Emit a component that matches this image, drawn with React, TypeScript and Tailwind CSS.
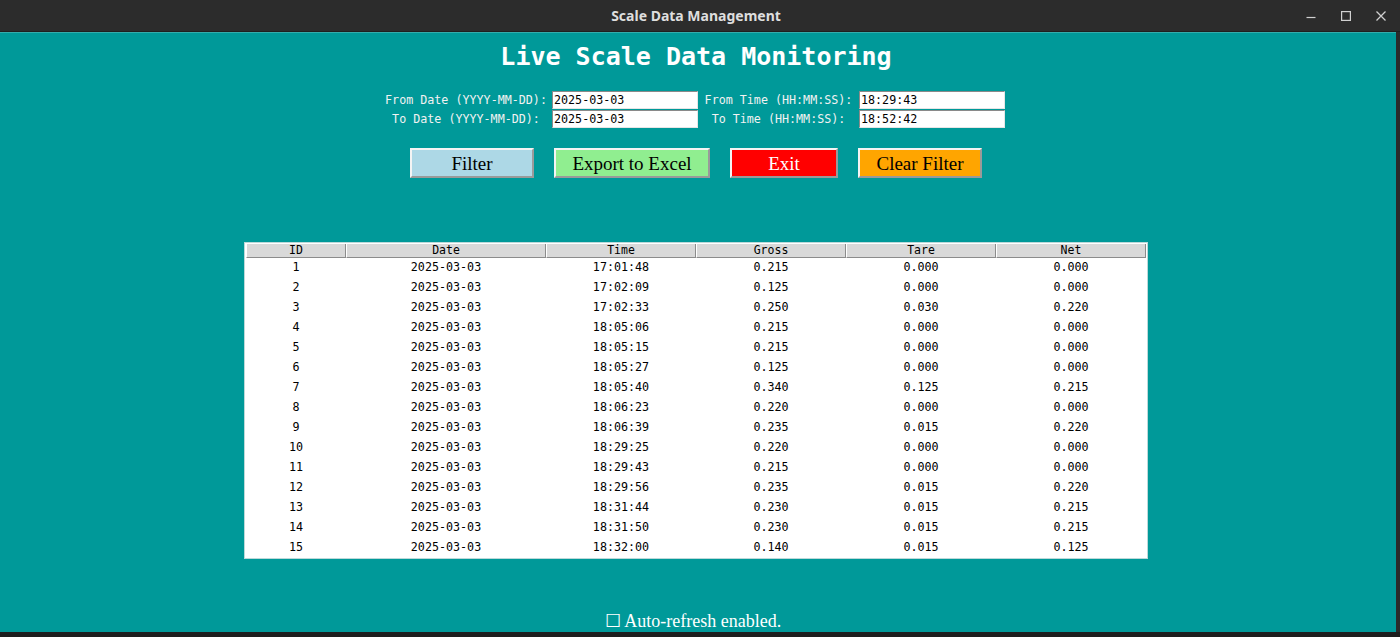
import React from 'react'

const rows: [number, string, string, string, string, string][] = [
  [1, '2025-03-03', '17:01:48', '0.215', '0.000', '0.000'],
  [2, '2025-03-03', '17:02:09', '0.125', '0.000', '0.000'],
  [3, '2025-03-03', '17:02:33', '0.250', '0.030', '0.220'],
  [4, '2025-03-03', '18:05:06', '0.215', '0.000', '0.000'],
  [5, '2025-03-03', '18:05:15', '0.215', '0.000', '0.000'],
  [6, '2025-03-03', '18:05:27', '0.125', '0.000', '0.000'],
  [7, '2025-03-03', '18:05:40', '0.340', '0.125', '0.215'],
  [8, '2025-03-03', '18:06:23', '0.220', '0.000', '0.000'],
  [9, '2025-03-03', '18:06:39', '0.235', '0.015', '0.220'],
  [10, '2025-03-03', '18:29:25', '0.220', '0.000', '0.000'],
  [11, '2025-03-03', '18:29:43', '0.215', '0.000', '0.000'],
  [12, '2025-03-03', '18:29:56', '0.235', '0.015', '0.220'],
  [13, '2025-03-03', '18:31:44', '0.230', '0.015', '0.215'],
  [14, '2025-03-03', '18:31:50', '0.230', '0.015', '0.215'],
  [15, '2025-03-03', '18:32:00', '0.140', '0.015', '0.125'],
]

const headers = ['ID', 'Date', 'Time', 'Gross', 'Tare', 'Net']

function Field({ value }: { value: string }) {
  return (
    <div className="h-[18px] w-[146px] bg-white border border-t-[#8a8a8a] border-l-[#8a8a8a] border-b-[#e6e6e6] border-r-[#e6e6e6] px-[1px] text-[11.7px] leading-[16px] text-black">
      {value}
    </div>
  )
}

function TkButton({ label, className }: { label: string; className: string }) {
  return (
    <button
      className={
        'h-[30px] border-2 border-t-[#f4f4f4] border-l-[#f4f4f4] border-b-[#9a9a9a] border-r-[#9a9a9a] font-["Liberation_Serif",serif] text-[19px] leading-[28px] ' +
        className
      }
    >
      {label}
    </button>
  )
}

export default function App() {
  return (
    <div className="w-[1400px] h-[637px] flex flex-col bg-[#1e1e1e] overflow-hidden">
      {/* window title bar */}
      <div className="h-[32px] relative flex items-center justify-center bg-[#2c2c2c] border-b border-[#1f1f1f]">
        <span className="font-['Noto_Sans',sans-serif] font-bold text-[14px] text-[#dedede] mr-[8px]">
          Scale Data Management
        </span>
        <div className="absolute right-[14px] top-0 h-[32px] flex items-center gap-[25px] text-[#d0d0d0]">
          <svg width="10" height="10" viewBox="0 0 10 10">
            <path d="M0.5 6.5h9" stroke="currentColor" strokeWidth="1.2" />
          </svg>
          <svg width="10" height="10" viewBox="0 0 10 10">
            <rect x="0.6" y="0.6" width="8.8" height="8.8" fill="none" stroke="currentColor" strokeWidth="1.2" />
          </svg>
          <svg width="10" height="10" viewBox="0 0 10 10">
            <path d="M0.5 0.5l9 9M9.5 0.5l-9 9" stroke="currentColor" strokeWidth="1.3" />
          </svg>
        </div>
      </div>

      <div className="flex flex-1 min-h-0">
        {/* app body */}
        <div className="w-[1396px] flex flex-col items-center bg-[#009999] pr-[4px] font-['DejaVu_Sans_Mono',monospace] border-t border-[#33adad]">
          <h1 className="mt-[10px] font-bold text-[25px] leading-[28px] text-white">
            Live Scale Data Monitoring
          </h1>

          <div className="mt-[20px] mr-[7px] grid grid-cols-[172px_146px_161px_146px] gap-y-[1px] items-center text-[11.7px] text-[#f2f2f2]">
            <div className="text-center leading-[18px]">From Date (YYYY-MM-DD):</div>
            <Field value="2025-03-03" />
            <div className="text-center leading-[18px]">From Time (HH:MM:SS):</div>
            <Field value="18:29:43" />
            <div className="text-center leading-[18px]">To Date (YYYY-MM-DD):</div>
            <Field value="2025-03-03" />
            <div className="text-center leading-[18px]">To Time (HH:MM:SS):</div>
            <Field value="18:52:42" />
          </div>

          <div className="mt-[20px] flex gap-[20px]">
            <TkButton label="Filter" className="w-[124px] bg-[#add8e6] text-black" />
            <TkButton label="Export to Excel" className="w-[156px] bg-[#90ee90] text-black" />
            <TkButton label="Exit" className="w-[108px] bg-[#ff0000] text-white" />
            <TkButton label="Clear Filter" className="w-[124px] bg-[#ffa500] text-black" />
          </div>

          <div className="mt-[64px] border border-[#bcd9d9] bg-white px-[1px] pt-[1px]">
            <div className="grid grid-cols-[100px_200px_150px_150px_150px_150px]">
              {headers.map((h) => (
                <div
                  key={h}
                  className="h-[14px] bg-[#d9d9d9] border-l border-l-white border-r border-r-[#8c8c8c] border-b border-b-[#8c8c8c] text-center text-[11.5px] leading-[13px] text-black"
                >
                  {h}
                </div>
              ))}
              {rows.map((r) =>
                r.map((c, i) => (
                  <div key={r[0] + '-' + i} className="h-[20px] text-center text-[11.7px] leading-[19px] text-black">
                    {c}
                  </div>
                ))
              )}
            </div>
          </div>

          <div className="mt-auto mr-[6px] font-['Liberation_Serif',serif] text-[18px] leading-[22px] text-white">
            ☐ Auto-refresh enabled.
          </div>
        </div>
        <div className="w-[4px] bg-[#2a2a2a]" />
      </div>

      <div className="h-[5px] bg-[#1e1e1e]" />
    </div>
  )
}
